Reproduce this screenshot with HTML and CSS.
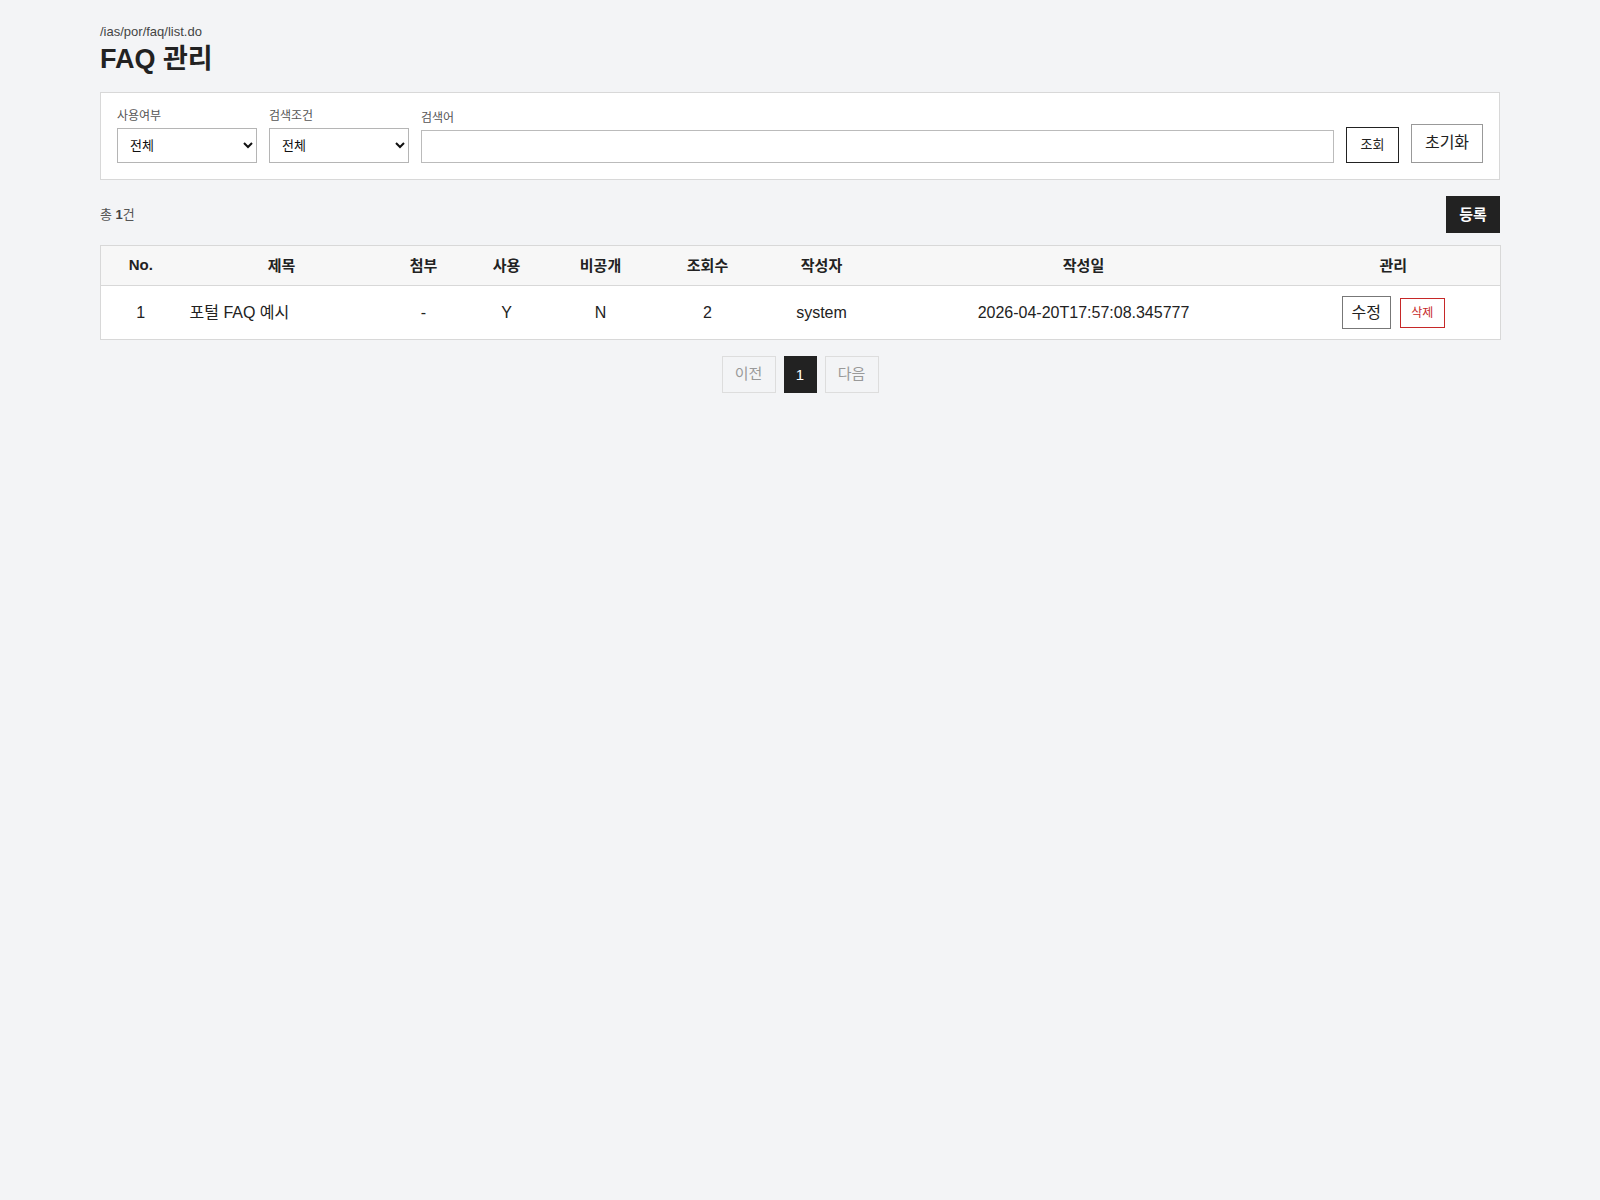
FILE: index.html
```html
<!DOCTYPE html>
<html lang="ko">
<head>
<meta charset="utf-8">
<title>FAQ 관리</title>
<link rel="stylesheet" href="styles.css">
</head>
<body>
<div class="page">
  <div class="path">/ias/por/faq/list.do</div>
  <h1 class="title">FAQ 관리</h1>

  <form class="filter">
    <div class="field">
      <label class="label">사용여부</label>
      <select class="select"><option>전체</option><option>Y</option><option>N</option></select>
    </div>
    <div class="field">
      <label class="label">검색조건</label>
      <select class="select"><option>전체</option><option>제목</option><option>내용</option></select>
    </div>
    <div class="field field-grow">
      <label class="label">검색어</label>
      <input class="input" type="text">
    </div>
    <button type="button" class="btn-search">조회</button>
    <button type="button" class="btn-reset">초기화</button>
  </form>

  <div class="toolbar">
    <div class="count">총 <b>1</b>건</div>
    <button type="button" class="btn-primary">등록</button>
  </div>

  <table class="grid">
    <colgroup>
      <col class="c-no"><col class="c-title"><col class="c-att"><col class="c-use"><col class="c-priv"><col class="c-views"><col class="c-author"><col class="c-date"><col class="c-manage">
    </colgroup>
    <thead>
      <tr>
        <th>No.</th><th>제목</th><th>첨부</th><th>사용</th><th>비공개</th><th>조회수</th><th>작성자</th><th>작성일</th><th>관리</th>
      </tr>
    </thead>
    <tbody>
      <tr>
        <td>1</td>
        <td class="left">포털 FAQ 예시</td>
        <td>-</td>
        <td>Y</td>
        <td>N</td>
        <td>2</td>
        <td>system</td>
        <td>2026-04-20T17:57:08.345777</td>
        <td>
          <div class="actions">
            <button type="button" class="btn-edit">수정</button>
            <button type="button" class="btn-del">삭제</button>
          </div>
        </td>
      </tr>
    </tbody>
  </table>

  <div class="pager">
    <button type="button" class="pg pg-off">이전</button>
    <button type="button" class="pg pg-on">1</button>
    <button type="button" class="pg pg-off">다음</button>
  </div>
</div>
</body>
</html>
```

FILE: styles.css
```css
* { box-sizing: border-box; }

html, body {
  margin: 0;
  padding: 0;
  background: #f3f4f6;
  color: #222;
  font-family: "Liberation Sans", "Noto Sans CJK KR", Arial, sans-serif;
}

.page {
  max-width: 1400px;
  margin: 0 auto;
  padding-top: 24px;
}

.path {
  font-size: 13px;
  line-height: 16px;
  color: #444;
}

.title {
  margin: 0 0 14px;
  font-size: 27px;
  line-height: 38px;
  font-weight: 700;
  color: #222;
}

.filter {
  display: flex;
  align-items: flex-end;
  gap: 12px;
  margin: 0;
  padding: 16px;
  background: #fff;
  border: 1px solid #d8d8d8;
}

.field {
  display: flex;
  flex-direction: column;
  gap: 4px;
}

.field-grow { flex: 1; }

.label {
  font-size: 12px;
  line-height: 15px;
  color: #555;
}

.select {
  width: 140px;
  height: 35px;
  padding: 0 8px;
  font-size: 13px;
  font-family: inherit;
  color: #111;
  background: #fff;
  border: 1px solid #b5b5b5;
  border-radius: 0;
}

.input {
  width: 100%;
  height: 33px;
  padding: 0 8px;
  font-size: 14px;
  font-family: inherit;
  background: #fff;
  border: 1px solid #bbb;
  border-radius: 0;
}

.btn-search {
  width: 53px;
  height: 36px;
  padding: 0 0 3px;
  font-size: 13px;
  font-family: inherit;
  color: #222;
  background: #fff;
  border: 1px solid #222;
  border-radius: 0;
}

.btn-reset {
  width: 72px;
  height: 39px;
  padding: 0 0 5px;
  font-size: 16px;
  font-family: inherit;
  color: #222;
  background: #fff;
  border: 1px solid #999;
  border-radius: 0;
}

.toolbar {
  display: flex;
  align-items: center;
  justify-content: space-between;
  margin-top: 16px;
}

.count {
  font-size: 13px;
  color: #555;
  padding-bottom: 3px;
}

.count b { color: #444; }

.btn-primary {
  width: 54px;
  height: 37px;
  padding: 0 0 3px;
  font-size: 15px;
  font-weight: 700;
  font-family: inherit;
  color: #fff;
  background: #222;
  border: 0;
  border-radius: 0;
}

.grid {
  width: 100%;
  margin-top: 12px;
  border-collapse: collapse;
  table-layout: fixed;
  background: #fff;
  border: 1px solid #d8d8d8;
}

.c-no { width: 80px; }
.c-title { width: 202px; }
.c-att { width: 82px; }
.c-use { width: 84px; }
.c-priv { width: 104px; }
.c-views { width: 110px; }
.c-author { width: 118px; }
.c-date { width: 406px; }
.c-manage { width: 214px; }

.grid th {
  height: 40px;
  padding: 0 8px 3px;
  font-size: 15px;
  font-weight: 700;
  color: #222;
  background: #f7f7f7;
  border-bottom: 1px solid #d8d8d8;
  text-align: center;
}

.grid td {
  height: 54px;
  padding: 0 8px;
  font-size: 16px;
  color: #222;
  text-align: center;
}

.grid td.left {
  text-align: left;
  padding-left: 9px;
  padding-bottom: 4px;
}

.actions {
  display: flex;
  justify-content: center;
  align-items: center;
  gap: 9px;
}

.btn-edit {
  width: 49px;
  height: 33px;
  padding: 0 0 4px;
  font-size: 16px;
  font-family: inherit;
  color: #222;
  background: #fff;
  border: 1px solid #777;
  border-radius: 0;
}

.btn-del {
  width: 45px;
  height: 30px;
  padding: 0 0 2px;
  font-size: 12px;
  font-family: inherit;
  color: #c62828;
  background: #fff;
  border: 1px solid #c62828;
  border-radius: 0;
}

.pager {
  display: flex;
  justify-content: center;
  gap: 8px;
  margin-top: 16px;
}

.pg {
  height: 37px;
  font-size: 15px;
  font-family: inherit;
  border-radius: 0;
}

.pg-off {
  width: 54px;
  padding: 0 0 4px;
  color: #999;
  background: #f3f4f6;
  border: 1px solid #ddd;
}

.pg-on {
  width: 33px;
  padding: 0;
  color: #fff;
  background: #222;
  border: 1px solid #222;
}
```
